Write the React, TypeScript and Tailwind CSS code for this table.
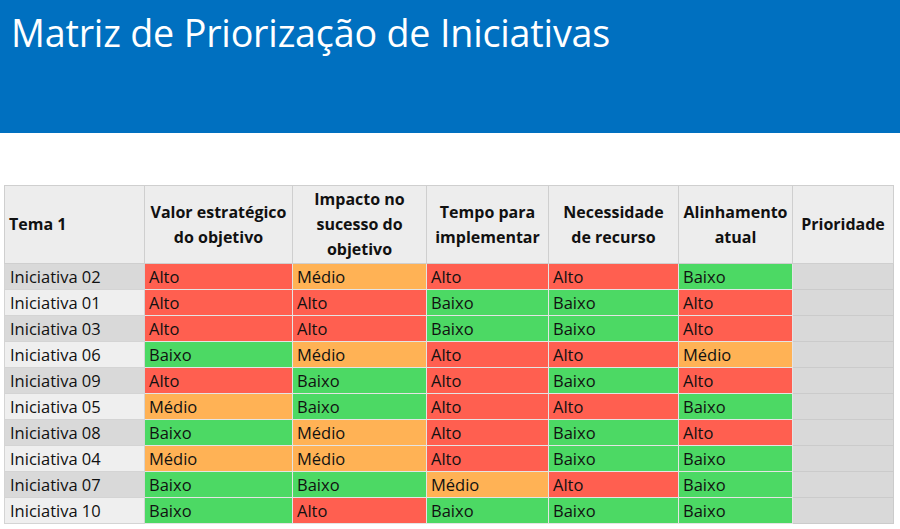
import React from "react";

type Lvl = "Alto" | "Médio" | "Baixo";
const rows: [string, Lvl, Lvl, Lvl, Lvl, Lvl][] = [
  ["Iniciativa 02", "Alto", "Médio", "Alto", "Alto", "Baixo"],
  ["Iniciativa 01", "Alto", "Alto", "Baixo", "Baixo", "Alto"],
  ["Iniciativa 03", "Alto", "Alto", "Baixo", "Baixo", "Alto"],
  ["Iniciativa 06", "Baixo", "Médio", "Alto", "Alto", "Médio"],
  ["Iniciativa 09", "Alto", "Baixo", "Alto", "Baixo", "Alto"],
  ["Iniciativa 05", "Médio", "Baixo", "Alto", "Alto", "Baixo"],
  ["Iniciativa 08", "Baixo", "Médio", "Alto", "Baixo", "Alto"],
  ["Iniciativa 04", "Médio", "Médio", "Alto", "Baixo", "Baixo"],
  ["Iniciativa 07", "Baixo", "Baixo", "Médio", "Alto", "Baixo"],
  ["Iniciativa 10", "Baixo", "Alto", "Baixo", "Baixo", "Baixo"],
];

const bg: Record<Lvl, string> = {
  Alto: "bg-[#ff5f50]",
  Médio: "bg-[#ffb255]",
  Baixo: "bg-[#4cd964]",
};

const headers = [
  { label: "Valor estratégico do objetivo", w: "w-[148px]" },
  { label: "Impacto no sucesso do objetivo", w: "w-[134px]" },
  { label: "Tempo para implementar", w: "w-[122px]" },
  { label: "Necessidade de recurso", w: "w-[130px]" },
  { label: "Alinhamento atual", w: "w-[114px]" },
  { label: "Prioridade", w: "w-[101px]" },
];

export default function App() {
  return (
    <div
      className="w-[900px] h-[529px] bg-white text-[#111] overflow-hidden"
      style={{ fontFamily: '"Open Sans", "Noto Sans", sans-serif' }}
    >
      <div className="h-[133px] bg-[#0070c0] pl-[11px] pt-[8px]">
        <h1 className="text-white text-[37.7px] leading-[50px] font-normal tracking-[-0.2px]">
          Matriz de Priorização de Iniciativas
        </h1>
      </div>
      <div className="pt-[52px] pl-[4px]">
        <table className="table-fixed border-collapse w-[889px] text-[16.5px]">
          <colgroup>
            <col className="w-[140px]" />
            {headers.map((h) => (
              <col key={h.label} className={h.w} />
            ))}
          </colgroup>
          <thead>
            <tr className="h-[78px] bg-[#ededed] text-[16px]">
              <th className="border border-[#cfcfcf] text-left font-bold px-[4px] leading-[25px]">
                Tema 1
              </th>
              {headers.map((h) => (
                <th
                  key={h.label}
                  className="border border-[#cfcfcf] text-center font-bold px-[3px] leading-[25px]"
                >
                  {h.label}
                </th>
              ))}
            </tr>
          </thead>
          <tbody>
            {rows.map((r, i) => (
              <tr key={r[0]} className="h-[26px]">
                <td
                  className={`border border-[#d4d4d4] px-[5px] leading-[24px] whitespace-nowrap ${
                    i % 2 === 0 ? "bg-[#d9d9d9]" : "bg-[#efefef]"
                  }`}
                >
                  {r[0]}
                </td>
                {(r.slice(1) as Lvl[]).map((v, j) => (
                  <td
                    key={j}
                    className={`border border-[#e4e4e4] px-[4px] leading-[24px] whitespace-nowrap ${bg[v]}`}
                  >
                    {v}
                  </td>
                ))}
                <td className="border border-[#cbcbcb] bg-[#d9d9d9]" />
              </tr>
            ))}
          </tbody>
        </table>
      </div>
    </div>
  );
}
